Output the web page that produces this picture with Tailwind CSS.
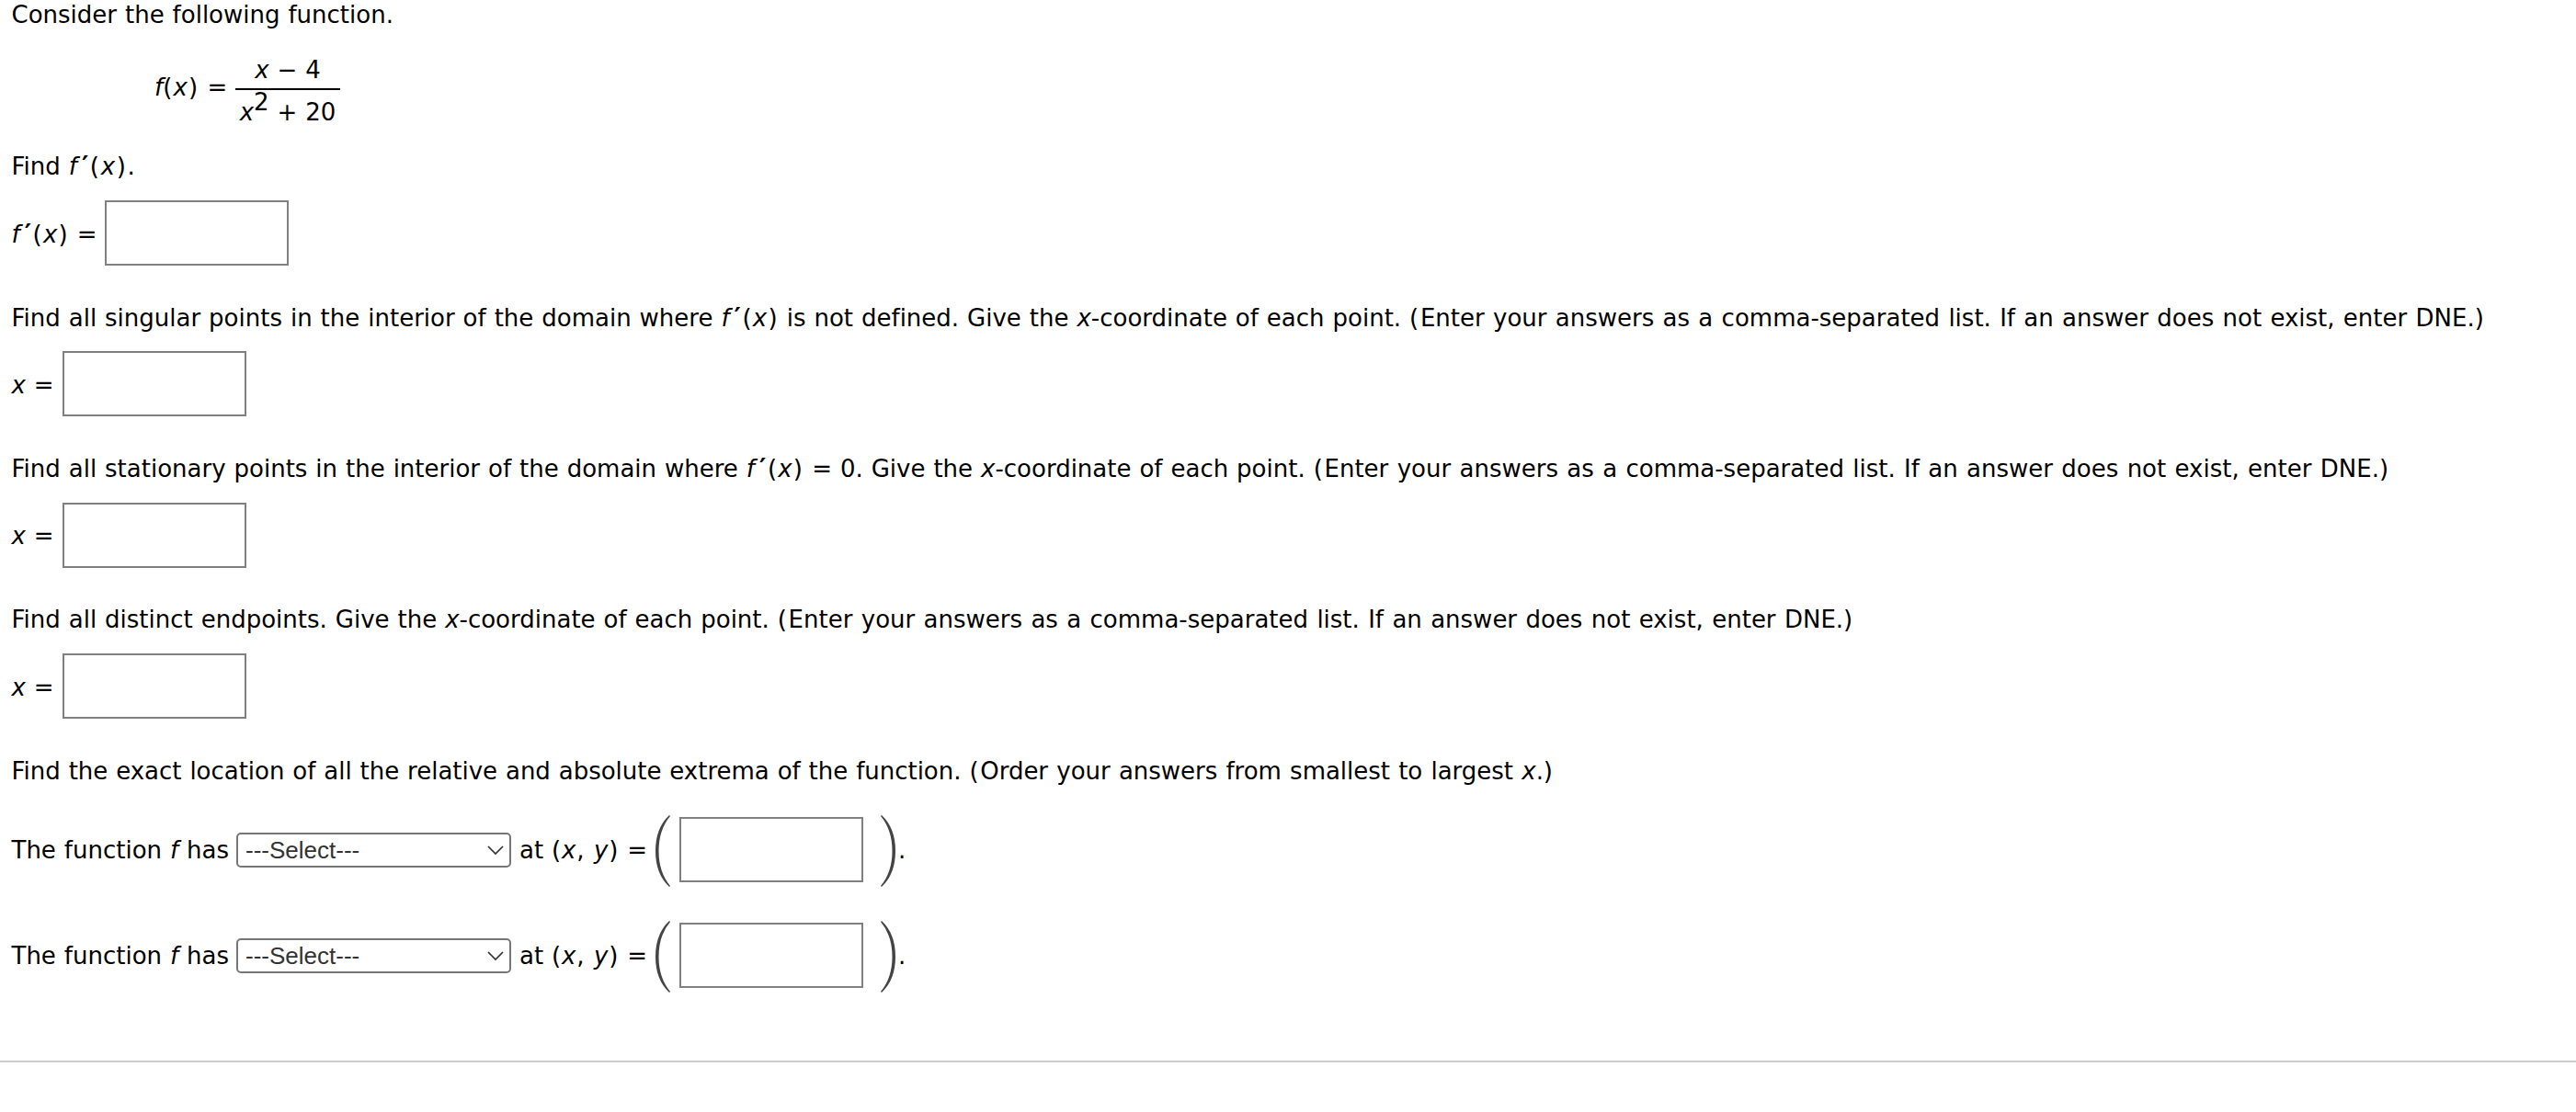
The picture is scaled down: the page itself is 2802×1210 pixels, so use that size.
<!DOCTYPE html>
<html lang="en">
<head>
  <meta charset="UTF-8">
  <meta name="viewport" content="width=device-width, initial-scale=1.0">
  <title>Function Extrema</title>
  <script src="https://cdn.jsdelivr.net/npm/@tailwindcss/browser@4"></script>
</head>
<body class="bg-white text-black font-['DejaVu_Sans',sans-serif] text-[26px] leading-[32px] [word-spacing:0.7px] [font-variant-ligatures:none] whitespace-nowrap overflow-x-hidden">
  <main class="pl-[12.5px]">
    <p class="h-[60px]">Consider the following function.</p>

    <!-- Function definition -->
    <div class="flex h-[105px] pl-[155.5px]">
      <div class="pt-[19px] w-[88px]"><i>f</i><span class="tracking-[1.2px]">(<i>x</i>)</span> =</div>
      <div class="w-[114px] text-center">
        <div class="h-[38px] border-b-2 border-black"><i>x</i> − 4</div>
        <div class="pt-[8px]"><i>x</i><sup class="text-[26px] leading-[0] top-[-11px]">2</sup> + 20</div>
      </div>
    </div>

    <!-- Derivative -->
    <p class="h-[53px]">Find <i class="tracking-[5px]">f</i><b class="tracking-[1.5px] text-[28px] leading-[0]">′</b><span class="tracking-[1.7px]">(<i>x</i>)</span>.</p>
    <div class="flex h-[112px]">
      <label for="derivative" class="w-[101.5px] pt-[21px]"><i class="tracking-[5px]">f</i><b class="tracking-[1.5px] text-[28px] leading-[0]">′</b><span class="tracking-[1.2px]">(<i>x</i>)</span> =</label>
      <input id="derivative" type="text" class="w-[200px] h-[71px] border-2 border-[#808080]">
    </div>

    <!-- Singular points -->
    <p class="h-[52px]">Find all singular points in the interior of the domain where <i class="tracking-[5px]">f</i><b class="tracking-[1.5px] text-[28px] leading-[0]">′</b><span class="tracking-[1.2px]">(<i>x</i>)</span> is not defined. Give the <i>x</i>-coordinate of each point. <span class="[word-spacing:1.05px]"><span class="tracking-[1.7px]">(</span>Enter your answers as a comma-separated list. If an answer does not exist, enter DNE.)</span></p>
    <div class="flex h-[112px]">
      <label for="singular" class="w-[55.5px] pt-[21px]"><i>x</i> =</label>
      <input id="singular" type="text" class="w-[200px] h-[71px] border-2 border-[#808080]">
    </div>

    <!-- Stationary points -->
    <p class="h-[53px]">Find all stationary points in the interior of the domain where <i class="tracking-[5px]">f</i><b class="tracking-[1.5px] text-[28px] leading-[0]">′</b><span class="tracking-[1.2px]">(<i>x</i>)</span> = 0. Give the <i>x</i>-coordinate of each point. <span class="[word-spacing:1.1px]"><span class="tracking-[1.7px]">(</span>Enter your answers as a comma-separated list. If an answer does not exist, enter DNE.)</span></p>
    <div class="flex h-[111px]">
      <label for="stationary" class="w-[55.5px] pt-[20px]"><i>x</i> =</label>
      <input id="stationary" type="text" class="w-[200px] h-[71px] border-2 border-[#808080]">
    </div>

    <!-- Endpoints -->
    <p class="h-[53px]">Find all distinct endpoints. Give the <i>x</i>-coordinate of each point. <span class="[word-spacing:1.1px]"><span class="tracking-[1.7px]">(</span>Enter your answers as a comma-separated list. If an answer does not exist, enter DNE.)</span></p>
    <div class="flex h-[112px]">
      <label for="endpoints" class="w-[55.5px] pt-[21px]"><i>x</i> =</label>
      <input id="endpoints" type="text" class="w-[200px] h-[71px] border-2 border-[#808080]">
    </div>

    <!-- Extrema -->
    <p class="h-[64px] tracking-[-0.02px]">Find the exact location of all the relative and absolute extrema of the function. <span class="[word-spacing:1px]"><span class="tracking-[1.7px]">(</span>Order your answers from smallest to largest <i>x</i>.)</span></p>
    <div class="flex h-[115px]">
      <span class="w-[244.5px] pt-[22px]">The function <i>f</i> has</span>
      <div class="flex items-center justify-between w-[299px] h-[38px] mt-[19px] pl-2 pr-[5px] border-2 border-[#767676] rounded-[5px] font-['Liberation_Sans',Arial,sans-serif] text-[26px] text-[#333]">
        <span>---Select---</span>
        <svg class="w-5 h-5" viewBox="0 0 20 20" fill="none" stroke="#333" stroke-width="1.7"><path d="M2 6l8 8 8-8"/></svg>
      </div>
      <span class="w-[147px] pt-[22px] pl-[9px]">at <span class="tracking-[0.8px]">(<i>x</i>, <i>y</i>)</span> =</span>
      <svg class="w-[18px] h-[78px] ml-[9px]" viewBox="0 0 18 78" fill="#444"><path d="M16 0Q1 14 1 39T16 78L17 77Q4.500 62 4.500 39T17 1Z"/></svg>
      <input type="text" aria-label="Point 1" class="w-[200px] h-[71px] mt-[2px] ml-[9px] border-2 border-[#808080]">
      <svg class="w-[18px] h-[78px] ml-[18px]" viewBox="0 0 18 78" fill="#444"><path d="M2 0Q17 14 17 39T2 78L1 77Q13.500 62 13.500 39T1 1Z"/></svg>
      <span class="pt-[22px] pl-[2px]">.</span>
    </div>
    <div class="flex h-[152px]">
      <span class="w-[244.5px] pt-[22px]">The function <i>f</i> has</span>
      <div class="flex items-center justify-between w-[299px] h-[38px] mt-[19px] pl-2 pr-[5px] border-2 border-[#767676] rounded-[5px] font-['Liberation_Sans',Arial,sans-serif] text-[26px] text-[#333]">
        <span>---Select---</span>
        <svg class="w-5 h-5" viewBox="0 0 20 20" fill="none" stroke="#333" stroke-width="1.7"><path d="M2 6l8 8 8-8"/></svg>
      </div>
      <span class="w-[147px] pt-[22px] pl-[9px]">at <span class="tracking-[0.8px]">(<i>x</i>, <i>y</i>)</span> =</span>
      <svg class="w-[18px] h-[78px] ml-[9px]" viewBox="0 0 18 78" fill="#444"><path d="M16 0Q1 14 1 39T16 78L17 77Q4.500 62 4.500 39T17 1Z"/></svg>
      <input type="text" aria-label="Point 2" class="w-[200px] h-[71px] mt-[2px] ml-[9px] border-2 border-[#808080]">
      <svg class="w-[18px] h-[78px] ml-[18px]" viewBox="0 0 18 78" fill="#444"><path d="M2 0Q17 14 17 39T2 78L1 77Q13.500 62 13.500 39T1 1Z"/></svg>
      <span class="pt-[22px] pl-[2px]">.</span>
    </div>
  </main>
  <hr class="border-t-2 border-[#ccc]">
</body>
</html>
